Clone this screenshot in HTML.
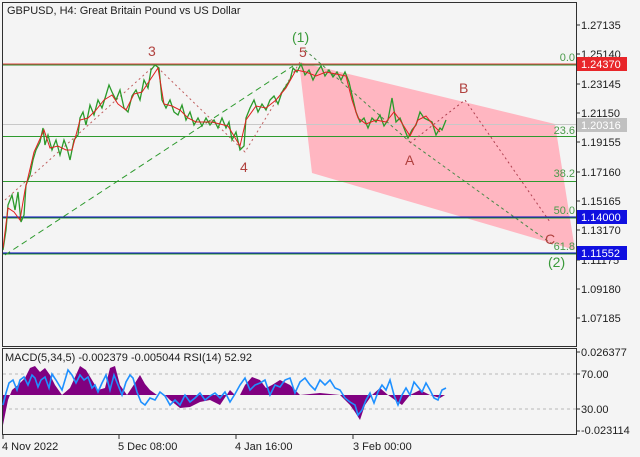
<!DOCTYPE html>
<html><head><meta charset="utf-8"><style>
html,body{margin:0;padding:0;background:#f4f4f4;}
svg{display:block;font-family:"Liberation Sans",sans-serif;}
</style></head><body>
<svg width="640" height="457" viewBox="0 0 640 457" xmlns="http://www.w3.org/2000/svg">
<rect width="640" height="457" fill="#f4f4f4"/>
<!-- pink channel -->
<polygon points="299,62 555,124 575,250 312,173" fill="#ffb6c1"/>
<!-- horizontal lines -->
<line x1="2" y1="124.5" x2="576" y2="124.5" stroke="#c8c8c8"/>
<line x1="2" y1="64" x2="576" y2="64" stroke="#e04040"/>
<line x1="2" y1="65" x2="576" y2="65" stroke="#2e8b2e"/>
<line x1="2" y1="136.5" x2="576" y2="136.5" stroke="#2e9a2e"/>
<line x1="2" y1="181.5" x2="576" y2="181.5" stroke="#2e9a2e"/>
<line x1="2" y1="217" x2="576" y2="217" stroke="#0000c0"/>
<line x1="2" y1="218" x2="576" y2="218" stroke="#2e9a2e"/>
<line x1="2" y1="253" x2="576" y2="253" stroke="#0000c0"/>
<line x1="2" y1="254" x2="576" y2="254" stroke="#2e9a2e"/>
<!-- wave lines -->
<polyline points="5,255 293,66" fill="none" stroke="#2e9a2e" stroke-dasharray="6,4"/>
<polyline points="5,200 155,65 245,152 300,62" fill="none" stroke="#c06060" stroke-dasharray="2,3"/>
<polyline points="305,50 410,142 535,232 555,246" fill="none" stroke="#4a8a4a" stroke-dasharray="3,3"/>
<polyline points="410,143 465,100 550,222" fill="none" stroke="#b04050" stroke-dasharray="2,3"/>
<!-- price -->
<polyline fill="none" stroke="#2a9a2a" stroke-width="1.3" points="3,250 6,230 8,205 12,195 15,210 18,192 21,222 24,215 26,185 30,175 33,160 36,150 40,142 43,128 45,145 48,135 52,150 56,140 60,155 64,140 67,148 70,160 74,140 78,135 80,118 83,112 86,125 90,105 94,115 98,100 102,108 106,95 109,85 112,92 116,100 120,90 124,108 128,112 132,96 136,90 140,100 144,80 148,88 151,70 155,65 159,68 162,100 166,108 170,100 174,112 178,115 182,105 186,120 190,112 194,125 198,118 202,126 206,118 210,125 214,120 218,128 222,118 226,128 229,122 232,140 236,132 240,150 244,146 246,118 250,108 254,100 258,112 262,104 266,110 270,100 274,96 278,104 282,92 286,86 290,80 293,68 297,72 301,64 305,75 309,70 313,80 317,72 321,66 325,76 329,70 333,77 337,72 341,80 345,72 349,82 352,95 356,112 360,122 364,118 368,128 372,118 376,122 380,115 384,126 388,120 392,98 396,122 400,118 404,128 408,138 412,130 416,125 420,112 424,118 428,120 432,122 436,135 440,128 442,130 446,120"/>
<polyline fill="none" stroke="#e02020" stroke-width="1" points="3,248 8,208 14,212 20,220 25,190 34,152 44,130 50,148 58,146 66,150 72,150 80,120 88,118 96,110 104,100 112,95 118,104 126,110 134,94 142,92 150,80 158,68 164,104 172,106 180,110 188,118 196,122 204,122 212,122 220,124 228,126 234,136 240,146 246,120 256,106 266,108 276,100 286,88 296,70 306,72 316,76 326,72 336,74 346,76 352,100 358,118 366,124 376,120 386,122 394,112 400,120 410,136 418,120 426,116 434,126 440,132"/>
<!-- borders -->
<rect x="2.5" y="2.5" width="574" height="344" fill="none" stroke="#303030"/>
<rect x="2.5" y="348.5" width="574" height="86" fill="none" stroke="#303030"/>
<!-- title -->
<text x="7" y="14" font-size="11" fill="#202020">GBPUSD, H4:  Great Britain Pound vs US Dollar</text>
<!-- elliott labels -->
<g font-size="14" fill="#b0413e">
<text x="148" y="56">3</text><text x="240" y="172">4</text><text x="299" y="57">5</text>
<text x="405" y="165">A</text><text x="459" y="93">B</text><text x="545" y="244">C</text></g>
<text x="292" y="42" font-size="14" fill="#3a9a3a">(1)</text>
<text x="548" y="267" font-size="14" fill="#3a9a3a">(2)</text>
<g font-size="11" fill="#4a9a4a" text-anchor="end">
<text x="575" y="61">0.0</text><text x="575" y="134">23.6</text><text x="575" y="177">38.2</text><text x="575" y="214">50.0</text><text x="575" y="250">61.8</text></g>
<!-- price axis -->
<g font-size="11" fill="#202020">
<g stroke="#303030"><line x1="576" y1="25" x2="580" y2="25"/><line x1="576" y1="54" x2="580" y2="54"/><line x1="576" y1="84" x2="580" y2="84"/><line x1="576" y1="113" x2="580" y2="113"/><line x1="576" y1="142" x2="580" y2="142"/><line x1="576" y1="172" x2="580" y2="172"/><line x1="576" y1="201" x2="580" y2="201"/><line x1="576" y1="230" x2="580" y2="230"/><line x1="576" y1="260" x2="580" y2="260"/><line x1="576" y1="289" x2="580" y2="289"/><line x1="576" y1="318" x2="580" y2="318"/></g>
<text x="581" y="29">1.27135</text><text x="581" y="58">1.25140</text><text x="581" y="88">1.23145</text><text x="581" y="117">1.21150</text><text x="581" y="146">1.19155</text><text x="581" y="176">1.17160</text><text x="581" y="205">1.15165</text><text x="581" y="234">1.13170</text><text x="581" y="264">1.11175</text><text x="581" y="293">1.09180</text><text x="581" y="322">1.07185</text>
</g>
<rect x="577" y="57" width="50" height="14" fill="#e8262a"/><text x="581" y="68" font-size="11" fill="#fff">1.24370</text>
<rect x="577" y="118" width="50" height="14" fill="#c0c0c0"/><text x="581" y="129" font-size="11" fill="#fff">1.20316</text>
<rect x="577" y="210" width="50" height="14" fill="#1010e0"/><text x="581" y="221" font-size="11" fill="#fff">1.14000</text>
<rect x="577" y="246" width="50" height="14" fill="#1010e0"/><text x="581" y="257" font-size="11" fill="#fff">1.11552</text>
<!-- indicator -->
<line x1="3" y1="374" x2="576" y2="374" stroke="#b8b8b8" stroke-dasharray="3,3"/>
<line x1="3" y1="409" x2="576" y2="409" stroke="#b8b8b8" stroke-dasharray="3,3"/>
<path fill="#800080" d="M3,395 L3,425 L8,400 L12,390 L18,385 L25,378 L30,368 L35,366 L40,372 L45,368 L50,375 L55,385 L62,395 L70,388 L76,375 L80,366 L86,370 L92,380 L98,390 L105,388 L110,368 L115,366 L120,385 L127,395 L135,383 L140,375 L145,384 L150,390 L157,395 L160,395 L165,395 L170,400 L180,408 L190,407 L200,402 L210,400 L220,405 L230,390 L235,395 L240,395 L245,385 L252,377 L260,380 L266,388 L272,385 L280,380 L290,385 L300,395 L320,393 L340,395 L350,405 L355,412 L360,420 L365,405 L372,395 L380,388 L388,395 L395,400 L402,405 L410,395 L420,390 L430,395 L440,398 L445,395 Z"/>
<polyline fill="none" stroke="#1e90ff" stroke-width="1.6" points="3,405 6,393 9,383 13,380 17,390 20,380 24,377 28,385 32,375 35,378 38,387 41,380 45,377 49,388 52,374 56,380 59,385 62,390 65,380 68,370 72,375 76,383 80,375 84,380 88,377 92,388 95,385 98,392 102,383 106,375 110,390 114,375 118,385 122,395 126,382 130,375 133,378 137,392 141,402 145,405 150,398 155,400 160,392 165,396 170,405 175,400 180,405 185,395 190,402 195,398 200,393 205,400 210,396 215,393 220,398 225,392 230,402 235,394 240,385 245,378 250,390 255,385 260,383 265,380 270,395 275,385 280,387 285,380 290,378 295,393 300,382 305,378 310,385 315,390 320,380 325,385 330,380 335,388 340,390 345,398 350,402 355,405 358,415 362,410 366,400 370,393 374,403 378,392 382,385 386,390 390,380 394,395 398,405 402,395 406,388 410,395 414,382 418,387 422,392 426,383 430,390 434,398 438,400 442,390 446,388"/>
<text x="5" y="361" font-size="11" fill="#202020">MACD(5,34,5) -0.002379 -0.005044 RSI(14) 52.92</text>
<g font-size="11" fill="#202020">
<g stroke="#303030"><line x1="576" y1="352" x2="580" y2="352"/><line x1="576" y1="374" x2="580" y2="374"/><line x1="576" y1="409" x2="580" y2="409"/><line x1="576" y1="431" x2="580" y2="431"/></g>
<text x="581" y="356">0.026377</text><text x="581" y="378">70.00</text><text x="581" y="413">30.00</text><text x="581" y="434">-0.023114</text>
</g>
<!-- time axis -->
<g stroke="#303030"><line x1="3" y1="435" x2="3" y2="439"/><line x1="119" y1="435" x2="119" y2="439"/><line x1="236" y1="435" x2="236" y2="439"/><line x1="353" y1="435" x2="353" y2="439"/></g>
<g font-size="11" fill="#202020">
<text x="2" y="450">4 Nov 2022</text><text x="118" y="450">5 Dec 08:00</text><text x="235" y="450">4 Jan 16:00</text><text x="353" y="450">3 Feb 00:00</text></g>
</svg>
</body></html>
